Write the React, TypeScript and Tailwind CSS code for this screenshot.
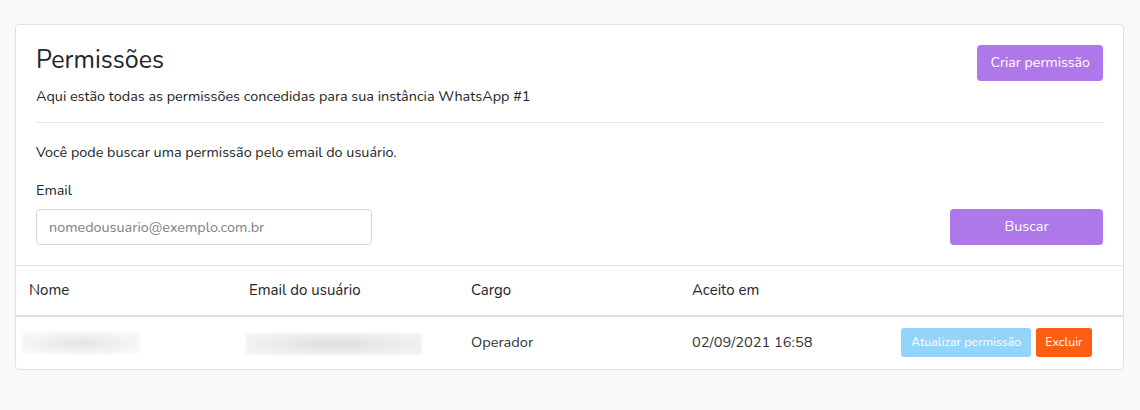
import React from "react";

const font = { fontFamily: "Nunito, Lato, 'Noto Sans', sans-serif" };

const rows = [
  { cargo: "Operador", aceito: "02/09/2021 16:58" },
];

const App = () => {
  return (
    <div
      className="min-h-[410px] bg-[#f8f9fb] pt-6 pl-[15px] pr-4 text-[#212529]"
      style={font}
    >
      <div className="w-[1109px] bg-white border border-[#dfe1e6] rounded-[4px]">
        {/* Header */}
        <div className="px-5 pt-5">
          <div className="flex justify-between items-start">
            <div>
              <h1 className="text-[25px] leading-[30px] font-normal text-[#212529]">
                Permissões
              </h1>
              <p className="text-[14.4px] mt-[11px] leading-[20px]">
                Aqui estão todas as permissões concedidas para sua instância WhatsApp #1
              </p>
            </div>
            <button className="h-9 px-[13px] rounded-[4px] bg-[#ae78ea] text-white text-[14.2px]">
              Criar permissão
            </button>
          </div>
          <div className="h-px bg-[#e4e6ea] mt-[16px]" />

          {/* Search */}
          <p className="text-[14.4px] mt-[19px] leading-[20px]">
            Você pode buscar uma permissão pelo email do usuário.
          </p>
          <label className="block text-[14.4px] mt-[18px] leading-[20px]">Email</label>
          <div className="flex justify-between items-center mt-[9px] pb-5">
            <input
              className="w-[336px] h-9 px-3 border border-[#d5d8dd] rounded-[4px] text-[14.4px] placeholder:text-[#7b7f86] outline-none"
              placeholder="nomedousuario@exemplo.com.br"
              style={font}
            />
            <button className="w-[153px] h-9 rounded-[4px] bg-[#ae78ea] text-white text-[14.4px]">
              Buscar
            </button>
          </div>
        </div>

        {/* Table */}
        <table className="w-full text-[15px] border-t border-[#dfe1e6]">
          <thead>
            <tr className="border-b-2 border-[#dfe1e6] h-[50px]">
              <th className="w-[221px] text-left font-normal pl-[13px]">Nome</th>
              <th className="w-[222px] text-left font-normal pl-[12px]">Email do usuário</th>
              <th className="w-[221px] text-left font-normal pl-[12px]">Cargo</th>
              <th className="w-[210px] text-left font-normal pl-[12px]">Aceito em</th>
              <th />
            </tr>
          </thead>
          <tbody className="text-[14.6px]">
            {rows.map((row, idx) => (
              <tr key={idx} className="h-[53px]">
                <td className="pl-[6px]">
                  <div className="w-[118px] h-[22px] bg-[radial-gradient(ellipse_at_center,_#e3e3e3_0%,_#f4f4f4_60%,_#fafafa_100%)] blur-[1px]" />
                </td>
                <td className="pl-[9px]">
                  <div className="w-[176px] h-[22px] mt-[2px] bg-[radial-gradient(ellipse_at_center,_#dedede_0%,_#efefef_60%,_#f6f6f6_100%)] blur-[1px]" />
                </td>
                <td className="pl-[12px] text-[#333]">{row.cargo}</td>
                <td className="pl-[12px] text-[#333]">{row.aceito}</td>
                <td>
                  <div className="flex gap-[5px] pl-[11px]">
                    <button className="h-[29px] px-[10px] rounded-[3px] bg-[#93d4fc] text-white text-[12.4px]">
                      Atualizar permissão
                    </button>
                    <button className="h-[29px] px-[9px] rounded-[3px] bg-[#fc5e12] text-white text-[12.4px]">
                      Excluir
                    </button>
                  </div>
                </td>
              </tr>
            ))}
          </tbody>
        </table>
      </div>
    </div>
  );
};

export default App;
